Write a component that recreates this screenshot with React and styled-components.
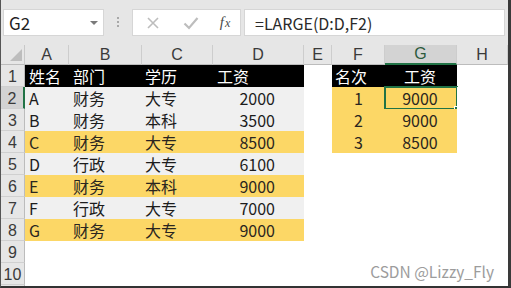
import React from 'react';
import styled, { createGlobalStyle } from 'styled-components';

const GlobalStyle = createGlobalStyle`
  html, body {
    margin: 0;
    padding: 0;
    background: #fff;
  }
  body {
    font-family: "Noto Sans CJK SC", "Liberation Sans", sans-serif;
  }
`;

const Frame = styled.div`
  position: relative;
  width: 511px;
  height: 288px;
  box-sizing: border-box;
  overflow: hidden;
  background: #fff;
  border-left: 1px solid #555;
  border-right: 3px solid #3a3a3a;
  border-bottom: 2px solid #333;
  display: flex;
  flex-direction: column;
`;

const Toolbar = styled.div`
  flex: none;
  height: 45px;
  box-sizing: border-box;
  padding: 9px 3px 0 2px;
  background: #e6e6e6;
  display: flex;
  align-items: flex-start;
`;

const NameBox = styled.div`
  width: 101px;
  height: 27px;
  box-sizing: border-box;
  background: #fff;
  border: 1px solid #d6d6d6;
  padding: 0 5px 0 5px;
  display: flex;
  align-items: center;
  justify-content: space-between;
  font-size: 17px;
  line-height: 1;
  color: #222;
`;

const Caret = styled.span`
  width: 0;
  height: 0;
  border-left: 4px solid transparent;
  border-right: 4px solid transparent;
  border-top: 4px solid #7a7a7a;
`;

const Grip = styled.div`
  margin: 8px 13px 0 13px;
  display: flex;
  flex-direction: column;
  gap: 2px;
  span {
    width: 2px;
    height: 2px;
    background: #a8a8a8;
  }
`;

const FormulaButtons = styled.div`
  width: 109px;
  height: 27px;
  box-sizing: border-box;
  background: #fff;
  border: 1px solid #d6d6d6;
  display: grid;
  grid-template-columns: 38px 38px 1fr;
  align-items: center;
  justify-items: center;
  padding-left: 1px;
`;

const Fx = styled.span`
  font-family: "Liberation Serif", serif;
  font-style: italic;
  font-size: 15px;
  color: #4a4a4a;
  line-height: 1;
  small {
    font-size: 12px;
    margin-left: 1px;
  }
`;

const FormulaInput = styled.div`
  flex: 1;
  margin-left: 3px;
  height: 27px;
  box-sizing: border-box;
  background: #fff;
  border: 1px solid #d6d6d6;
  padding-left: 10px;
  display: flex;
  align-items: center;
  font-size: 16px;
  line-height: 1;
  color: #2a2a2a;
`;

const Sheet = styled.div`
  flex: 1;
  display: grid;
  grid-template-columns: 24px 44px 73px 71px 91px 28px 53px 72px 1fr;
  grid-template-rows: 20px repeat(11, 22px);
  overflow: hidden;
`;

const Corner = styled.div`
  background: #e6e6e6;
  border-right: 1px solid #c8c8c8;
  border-bottom: 1px solid #bcbcbc;
  display: flex;
  align-items: flex-end;
  justify-content: flex-end;
  padding: 0 2px 3px 0;
`;

const ColHead = styled.div`
  background: ${(p) => (p.$selected ? '#d3d3d3' : '#e6e6e6')};
  border-right: 1px solid #cdcdcd;
  border-bottom: ${(p) => (p.$selected ? '2px solid #217346' : '1px solid #bcbcbc')};
  display: flex;
  align-items: center;
  justify-content: center;
  font-size: 16px;
  line-height: 1;
  color: ${(p) => (p.$selected ? '#2c5a3c' : '#3a3a3a')};
  font-family: "Liberation Sans", sans-serif;
`;

const RowHead = styled.div`
  background: ${(p) => (p.$selected ? '#d3d3d3' : '#e6e6e6')};
  border-bottom: 1px solid #d0d0d0;
  border-right: ${(p) => (p.$selected ? '2px solid #217346' : '1px solid #bcbcbc')};
  box-sizing: border-box;
  display: flex;
  align-items: center;
  justify-content: center;
  font-size: 16px;
  line-height: 1;
  color: #3a3a3a;
  font-family: "Liberation Sans", sans-serif;
  padding-top: 2px;
`;

const tones = {
  dark: { bg: '#000', fg: '#fff' },
  gray: { bg: '#f0f0f0', fg: '#1c1c1c' },
  gold: { bg: '#fcd766', fg: '#2a2520' },
  none: { bg: '#fff', fg: '#1c1c1c' },
};

const Cell = styled.div`
  position: relative;
  background: ${(p) => tones[p.$tone].bg};
  color: ${(p) => tones[p.$tone].fg};
  display: flex;
  align-items: center;
  justify-content: ${(p) => p.$align || 'flex-start'};
  padding: ${(p) => p.$pad || '0 0 0 4px'};
  font-size: 16px;
  line-height: 1;
  white-space: nowrap;
`;

const Selection = styled.div`
  position: absolute;
  inset: -1px;
  border: 2px solid #217346;
  pointer-events: none;
  &::after {
    content: '';
    position: absolute;
    right: -5px;
    bottom: -5px;
    width: 5px;
    height: 5px;
    background: #217346;
    border: 1px solid #fff;
  }
`;

const Watermark = styled.div`
  position: absolute;
  right: 14px;
  bottom: 7px;
  font-size: 15.5px;
  line-height: 1;
  color: #9c9c9c;
`;

const columns = ['A', 'B', 'C', 'D', 'E', 'F', 'G', 'H'];

const rows = [
  { main: ['姓名', '部门', '学历', '工资'], tone: 'dark', side: ['名次', '工资'], sideTone: 'dark' },
  { main: ['A', '财务', '大专', '2000'], tone: 'gray', side: ['1', '9000'], sideTone: 'gold' },
  { main: ['B', '财务', '本科', '3500'], tone: 'gray', side: ['2', '9000'], sideTone: 'gold' },
  { main: ['C', '财务', '大专', '8500'], tone: 'gold', side: ['3', '8500'], sideTone: 'gold' },
  { main: ['D', '行政', '大专', '6100'], tone: 'gray' },
  { main: ['E', '财务', '本科', '9000'], tone: 'gold' },
  { main: ['F', '行政', '大专', '7000'], tone: 'gray' },
  { main: ['G', '财务', '大专', '9000'], tone: 'gold' },
  { main: [], tone: 'none' },
  { main: [], tone: 'none' },
  { main: [], tone: 'none', hideNumber: true },
];

const XIcon = () => (
  <svg width="14" height="14" viewBox="0 0 14 14">
    <path d="M2 2 L12 12 M12 2 L2 12" stroke="#bdbdbd" strokeWidth="1.6" fill="none" />
  </svg>
);

const CheckIcon = () => (
  <svg width="16" height="14" viewBox="0 0 16 14">
    <path d="M1.5 7.5 L6 12 L14.5 2" stroke="#bdbdbd" strokeWidth="2.2" fill="none" />
  </svg>
);

const SelectAll = () => (
  <svg width="12" height="12" viewBox="0 0 12 12">
    <polygon points="12,0 12,12 0,12" fill="#bdbdbd" />
  </svg>
);

const SheetRow = ({ row, index }) => {
  const n = index + 1;
  const isHead = index === 0;
  const main = row.main;
  const hasMain = main.length > 0;
  const mainTone = row.tone;
  return (
    <>
      <RowHead $selected={n === 2}>{row.hideNumber ? '' : n}</RowHead>
      <Cell $tone={mainTone}>{main[0]}</Cell>
      <Cell $tone={mainTone}>{main[1]}</Cell>
      <Cell $tone={mainTone} $pad="0 0 0 3px">{main[2]}</Cell>
      {isHead || !hasMain ? (
        <Cell $tone={mainTone}>{main[3]}</Cell>
      ) : (
        <Cell $tone={mainTone} $align="flex-end" $pad="0 29px 0 0">{main[3]}</Cell>
      )}
      <Cell $tone="none" />
      {row.side ? (
        <>
          <Cell $tone={row.sideTone} $align={isHead ? 'flex-start' : 'center'} $pad={isHead ? '0 0 0 3px' : '0'}>
            {row.side[0]}
          </Cell>
          <Cell $tone={row.sideTone} $align="center" $pad="0 2px 0 0">
            {row.side[1]}
            {n === 2 && <Selection />}
          </Cell>
        </>
      ) : (
        <>
          <Cell $tone="none" />
          <Cell $tone="none" />
        </>
      )}
      <Cell $tone="none" />
    </>
  );
};

export default function App() {
  return (
    <Frame>
      <GlobalStyle />
      <Toolbar>
        <NameBox>
          <span>G2</span>
          <Caret />
        </NameBox>
        <Grip>
          <span />
          <span />
          <span />
        </Grip>
        <FormulaButtons>
          <XIcon />
          <CheckIcon />
          <Fx>f<small>x</small></Fx>
        </FormulaButtons>
        <FormulaInput>=LARGE(D:D,F2)</FormulaInput>
      </Toolbar>
      <Sheet>
        <Corner>
          <SelectAll />
        </Corner>
        {columns.map((c) => (
          <ColHead key={c} $selected={c === 'G'}>{c}</ColHead>
        ))}
        {rows.map((row, i) => (
          <SheetRow key={i} row={row} index={i} />
        ))}
      </Sheet>
      <Watermark>CSDN @Lizzy_Fly</Watermark>
    </Frame>
  );
}
